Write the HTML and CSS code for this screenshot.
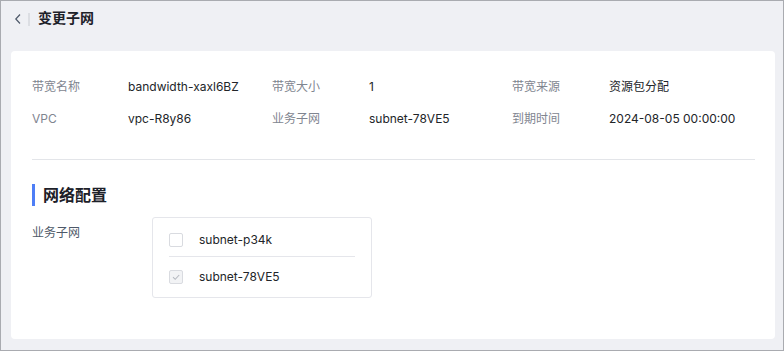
FILE: index.html
```html
<!DOCTYPE html>
<html lang="zh">
<head>
<meta charset="utf-8">
<link rel="stylesheet" href="styles.css">
</head>
<body>
<div class="frame">
  <header class="top">
    <span class="back">
      <svg width="8" height="12" viewBox="0 0 8 12"><path d="M6 1.5 L1.8 6 L6 10.5" fill="none" stroke="#4e5969" stroke-width="1.2"/></svg>
    </span>
    <span class="sep"></span>
    <h1 class="page-title">变更子网</h1>
  </header>
  <main class="card">
    <div class="info">
      <div class="item"><span class="k">带宽名称</span><span class="v">bandwidth-xaxl6BZ</span></div>
      <div class="item"><span class="k">带宽大小</span><span class="v">1</span></div>
      <div class="item"><span class="k">带宽来源</span><span class="v">资源包分配</span></div>
      <div class="item"><span class="k">VPC</span><span class="v">vpc-R8y86</span></div>
      <div class="item"><span class="k">业务子网</span><span class="v">subnet-78VE5</span></div>
      <div class="item"><span class="k">到期时间</span><span class="v">2024-08-05 00:00:00</span></div>
    </div>
    <div class="divider"></div>
    <h2 class="section-title">网络配置</h2>
    <div class="form-row">
      <span class="form-label">业务子网</span>
      <div class="options">
        <div class="opt opt-first">
          <span class="cb"></span>
          <span class="opt-text">subnet-p34k</span>
        </div>
        <div class="opt">
          <span class="cb cb-checked">
            <svg width="10" height="10" viewBox="0 0 10 10"><path d="M2 5.2 L4.2 7.3 L8.2 3" fill="none" stroke="#b5b9c0" stroke-width="1.1"/></svg>
          </span>
          <span class="opt-text">subnet-78VE5</span>
        </div>
      </div>
    </div>
  </main>
</div>
</body>
</html>
```
FILE: styles.css
```css
* { box-sizing: border-box; }
html, body { margin: 0; padding: 0; }
body {
  width: 784px;
  height: 351px;
  font-family: "Inter", "Noto Sans CJK SC", sans-serif;
  font-size: 12px;
  color: #1d2129;
}
.frame {
  width: 784px;
  height: 351px;
  border: 1px solid #a9abb0;
  background: #eff0f4;
  display: flex;
  flex-direction: column;
}
.top {
  height: 50px;
  display: flex;
  align-items: flex-start;
  padding: 7px 0 0 12px;
}
.back {
  width: 10px;
  height: 20px;
  display: flex;
  align-items: center;
  justify-content: center;
  margin-top: 1px;
}
.sep {
  width: 2px;
  height: 13px;
  background: #dcdee3;
  margin: 5px 0 0 5px;
}
.page-title {
  margin: 0 0 0 8px;
  font-size: 14px;
  font-weight: 700;
  line-height: 20px;
  color: #1d2129;
}
.card {
  flex: 1;
  margin: 0 8px 11px 10px;
  background: #ffffff;
  border-radius: 4px;
  padding: 20px 20px 0 21px;
}
.info {
  display: grid;
  grid-template-columns: 240px 240px 240px;
}
.item {
  height: 32px;
  display: flex;
  align-items: center;
  line-height: 20px;
}
.k {
  width: 96px;
  flex: none;
  color: #7f8590;
}
.item:nth-child(3n+2) .k, .item:nth-child(3n) .k { width: 97px; }
.v { color: #222529; }
.divider {
  height: 1px;
  background: #e3e5e9;
  margin-top: 24px;
}
.section-title {
  margin: 24px 0 0 0;
  height: 22px;
  border-left: 3px solid #4e7ef6;
  padding-left: 8px;
  font-size: 16px;
  font-weight: 700;
  line-height: 22px;
  color: #1d2129;
}
.form-row {
  display: flex;
  margin-top: 11px;
}
.form-label {
  width: 120px;
  flex: none;
  color: #4e5969;
  line-height: 20px;
  margin-top: 6px;
}
.options {
  width: 220px;
  border: 1px solid #e5e6eb;
  border-radius: 3px;
  padding: 6px 16px 4px 16px;
}
.opt {
  height: 32px;
  display: flex;
  align-items: center;
}
.opt-first {
  border-bottom: 1px solid #e5e6eb;
  height: 33px;
  margin-bottom: 4px;
}
.cb {
  width: 14px;
  height: 14px;
  border: 1px solid #d9dbe0;
  border-radius: 2px;
  background: #ffffff;
  display: flex;
  align-items: center;
  justify-content: center;
  flex: none;
}
.cb-checked { background: #f2f3f5; }
.opt-text {
  margin-left: 16px;
  color: #222529;
  line-height: 20px;
}
```
